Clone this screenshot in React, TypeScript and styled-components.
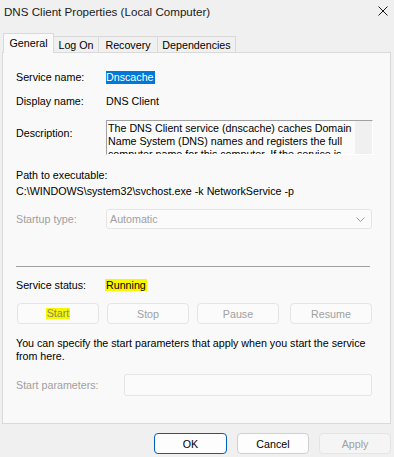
import React from "react";
import styled, { createGlobalStyle } from "styled-components";

const Global = createGlobalStyle`
  html, body { margin: 0; padding: 0; background: #f0f0f0; }
  body { font-family: "Liberation Sans", Arial, sans-serif; font-size: 10.7px; color: #000; }
  * { box-sizing: border-box; }
`;

const Window = styled.div`
  width: 394px;
  height: 457px;
  background: #f0f0f0;
  display: flex;
  flex-direction: column;
  overflow: hidden;
`;

const TitleBar = styled.div`
  height: 22px;
  display: flex;
  align-items: center;
  justify-content: space-between;
  padding: 0 5px 0 4px;
`;

const Title = styled.div`
  font-size: 11.6px;
  color: #1a1a1a;
`;

const CloseBtn = styled.div`
  width: 12px;
  height: 12px;
  display: flex;
  align-items: center;
  justify-content: center;
`;

const TabRow = styled.div`
  margin-top: 11px;
  height: 19px;
  padding-left: 3px;
  display: flex;
  align-items: flex-end;
`;

const Tab = styled.div<{ $active?: boolean; $w: number }>`
  width: ${(p) => p.$w}px;
  height: ${(p) => (p.$active ? 20 : 16)}px;
  margin-bottom: ${(p) => (p.$active ? -1 : 0)}px;
  margin-left: ${(p) => (p.$active ? 0 : -1)}px;
  position: relative;
  z-index: ${(p) => (p.$active ? 2 : 1)};
  background: ${(p) => (p.$active ? "#f9f9f9" : "#f0f0f0")};
  border: 1px solid #d9d9d9;
  border-bottom: none;
  display: flex;
  align-items: center;
  justify-content: center;
  padding-bottom: ${(p) => (p.$active ? 2 : 0)}px;
  &:first-child { margin-left: 0; }
`;

const Panel = styled.div`
  margin-left: 2px;
  width: 389px;
  height: 372px;
  border: 1px solid #d9d9d9;
  background: #f9f9f9;
  padding-left: 13px;
  display: flex;
  flex-direction: column;
`;

const Row = styled.div<{ $mt: number; $h: number; $align?: string }>`
  margin-top: ${(p) => p.$mt}px;
  height: ${(p) => p.$h}px;
  display: flex;
  align-items: ${(p) => p.$align || "center"};
`;

const Label = styled.div<{ $w?: number; $disabled?: boolean; $pt?: number }>`
  width: ${(p) => p.$w || 90}px;
  flex: none;
  color: ${(p) => (p.$disabled ? "#a0a0a0" : "#000")};
  padding-top: ${(p) => p.$pt || 0}px;
  line-height: 14px;
`;

const Value = styled.div`
  line-height: 14px;
`;

const Selected = styled.span`
  background: #0078d7;
  color: #fff;
  padding: 0 1px 0 0;
  line-height: 13px;
  display: inline-block;
`;

const Marked = styled.span`
  background: #f7f700;
  line-height: 12px;
  display: inline-block;
  padding: 0 1px;
  margin-left: -1px;
`;

const DescBox = styled.div`
  width: 267px;
  height: 35px;
  border-top: 1px solid #a0a0a0;
  border-left: 1px solid #a0a0a0;
  border-right: 1px solid #ffffff;
  border-bottom: 1px solid #ffffff;
  background: #fbfbfb;
  display: flex;
  overflow: hidden;
`;

const DescText = styled.div`
  flex: 1;
  padding: 1px 0 0 1px;
  line-height: 13px;
  overflow: hidden;
  white-space: nowrap;
`;

const ScrollTrack = styled.div`
  width: 17px;
  flex: none;
  background: #f0f0f0;
`;

const PathBlock = styled.div<{ $mt: number }>`
  margin-top: ${(p) => p.$mt}px;
  line-height: 16px;
`;

const Select = styled.div`
  width: 266px;
  height: 20px;
  border: 1px solid #e5e5e5;
  border-radius: 3px;
  background: #fbfbfb;
  color: #a0a0a0;
  display: flex;
  align-items: center;
  justify-content: space-between;
  padding: 0 6px 0 3px;
`;

const Separator = styled.div<{ $mt: number }>`
  margin-top: ${(p) => p.$mt}px;
  width: 354px;
  height: 1px;
  background: #a0a0a0;
`;

const ButtonRow = styled.div<{ $mt: number }>`
  margin-top: ${(p) => p.$mt}px;
  height: 21px;
  padding-left: 1px;
  display: flex;
  gap: 8px;
`;

const SvcButton = styled.div<{ $ml?: number }>`
  width: 82px;
  height: 21px;
  margin-left: ${(p) => p.$ml || 0}px;
  border: 1px solid #e5e5e5;
  border-radius: 4px;
  background: #fbfbfb;
  color: #a0a0a0;
  display: flex;
  align-items: center;
  justify-content: center;
`;

const MarkedBtnText = styled.span`
  background: #f7f700;
  color: #8a8a60;
  line-height: 11px;
  padding: 0 1px;
  display: inline-block;
`;

const HelpText = styled.div<{ $mt: number }>`
  margin-top: ${(p) => p.$mt}px;
  line-height: 13px;
  width: 356px;
`;

const TextInput = styled.div`
  width: 248px;
  height: 22px;
  border: 1px solid #e5e5e5;
  border-radius: 3px;
  background: #fbfbfb;
`;

const Footer = styled.div`
  margin-top: 9px;
  padding-right: 3px;
  display: flex;
  justify-content: flex-end;
  gap: 10px;
`;

const DlgButton = styled.div<{ $variant: "default" | "normal" | "disabled"; $w: number }>`
  width: ${(p) => p.$w}px;
  height: 21px;
  border-radius: 4px;
  display: flex;
  align-items: center;
  justify-content: center;
  background: ${(p) => (p.$variant === "disabled" ? "#f5f5f5" : "#fdfdfd")};
  color: ${(p) => (p.$variant === "disabled" ? "#a0a0a0" : "#000")};
  border: 1px solid
    ${(p) =>
      p.$variant === "default" ? "#005fb8" : p.$variant === "normal" ? "#d0d0d0" : "#e5e5e5"};
`;

export default function App() {
  return (
    <>
      <Global />
      <Window>
        <TitleBar>
          <Title>DNS Client Properties (Local Computer)</Title>
          <CloseBtn>
            <svg width="10" height="10" viewBox="0 0 10 10">
              <path d="M0.5 0.5 L9.5 9.5 M9.5 0.5 L0.5 9.5" stroke="#1a1a1a" strokeWidth="1" fill="none" />
            </svg>
          </CloseBtn>
        </TitleBar>
        <TabRow>
          <Tab $active $w={51}>General</Tab>
          <Tab $w={46}>Log On</Tab>
          <Tab $w={60}>Recovery</Tab>
          <Tab $w={79}>Dependencies</Tab>
        </TabRow>
        <Panel>
          <Row $mt={17} $h={14}>
            <Label>Service name:</Label>
            <Value>
              <Selected>Dnscache</Selected>
            </Value>
          </Row>
          <Row $mt={10} $h={14}>
            <Label>Display name:</Label>
            <Value>DNS Client</Value>
          </Row>
          <Row $mt={12} $h={35} $align="flex-start">
            <Label $pt={6}>Description:</Label>
            <DescBox>
              <DescText>
                The DNS Client service (dnscache) caches Domain
                <br />
                Name System (DNS) names and registers the full
                <br />
                computer name for this computer. If the service is
              </DescText>
              <ScrollTrack />
            </DescBox>
          </Row>
          <PathBlock $mt={12}>
            Path to executable:
            <br />
            C:\WINDOWS\system32\svchost.exe -k NetworkService -p
          </PathBlock>
          <Row $mt={10} $h={20}>
            <Label $disabled>Startup type:</Label>
            <Select>
              <span>Automatic</span>
              <svg width="9" height="5" viewBox="0 0 9 5">
                <path d="M0.5 0.5 L4.5 4.5 L8.5 0.5" stroke="#9a9a9a" strokeWidth="1" fill="none" />
              </svg>
            </Select>
          </Row>
          <Separator $mt={37} />
          <Row $mt={11} $h={14}>
            <Label>Service status:</Label>
            <Value>
              <Marked>Running</Marked>
            </Value>
          </Row>
          <ButtonRow $mt={11}>
            <SvcButton>
              <MarkedBtnText>Start</MarkedBtnText>
            </SvcButton>
            <SvcButton>Stop</SvcButton>
            <SvcButton>Pause</SvcButton>
            <SvcButton $ml={3}>Resume</SvcButton>
          </ButtonRow>
          <HelpText $mt={13}>
            You can specify the start parameters that apply when you start the service
            from here.
          </HelpText>
          <Row $mt={11} $h={22}>
            <Label $disabled $w={108}>Start parameters:</Label>
            <TextInput />
          </Row>
        </Panel>
        <Footer>
          <DlgButton $variant="default" $w={73}>OK</DlgButton>
          <DlgButton $variant="normal" $w={72}>Cancel</DlgButton>
          <DlgButton $variant="disabled" $w={72}>Apply</DlgButton>
        </Footer>
      </Window>
    </>
  );
}
